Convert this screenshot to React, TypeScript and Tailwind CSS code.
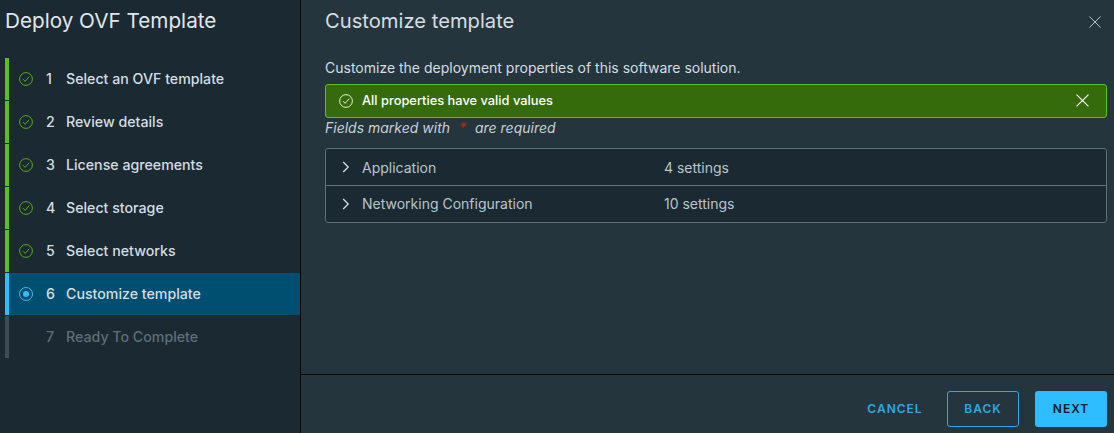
import React from 'react';

const font = 'font-["Inter","Noto_Sans",sans-serif]';

const steps = [
  { n: 1, label: 'Select an OVF template', state: 'done' },
  { n: 2, label: 'Review details', state: 'done' },
  { n: 3, label: 'License agreements', state: 'done' },
  { n: 4, label: 'Select storage', state: 'done' },
  { n: 5, label: 'Select networks', state: 'done' },
  { n: 6, label: 'Customize template', state: 'active' },
  { n: 7, label: 'Ready To Complete', state: 'todo' },
];

const CheckCircle = ({ color, size = 14 }: { color: string; size?: number }) => (
  <svg width={size} height={size} viewBox="0 0 16 16" fill="none" stroke={color} strokeWidth="1">
    <circle cx="8" cy="8" r="7.3" />
    <path d="M4.6 8.2 7 10.7 11.6 5.4" />
  </svg>
);

const Close = ({ color, size }: { color: string; size: number }) => (
  <svg width={size} height={size} viewBox="0 0 12 12" fill="none" stroke={color} strokeWidth="1">
    <path d="M0.5 0.5 11.5 11.5M11.5 0.5 0.5 11.5" />
  </svg>
);

const Chevron = () => (
  <svg width="8" height="12" viewBox="0 0 8 12" fill="none" stroke="#d5dde2" strokeWidth="1.3">
    <path d="M1.2 1 6.2 6 1.2 11" />
  </svg>
);

const Step = ({ n, label, state }: { n: number; label: string; state: string }) => {
  const bar = state === 'done' ? 'bg-[#5ec010]' : state === 'active' ? 'bg-[#2ebdff]' : 'bg-[#3d4d55]';
  return (
    <div className={`flex h-[42px] items-stretch ${state === 'active' ? 'bg-[#004f70]' : ''}`}>
      <div className={`w-1 ${bar}`} />
      <div className="flex w-[37px] items-center pl-[10px]">
        {state === 'done' && <CheckCircle color="#5ec010" />}
        {state === 'active' && (
          <span className="flex h-[14px] w-[14px] items-center justify-center rounded-full border border-[#2ebdff]">
            <span className="h-[6px] w-[6px] rounded-full bg-[#2ebdff]" />
          </span>
        )}
      </div>
      <div className={`flex items-center pb-[1px] text-[14.2px] font-medium ${state === 'todo' ? 'text-[#5f6e76]' : 'text-[#d5dde2]'}`}>
        <span className="w-[20px]">{n}</span>
        <span>{label}</span>
      </div>
    </div>
  );
};

const SectionRow = ({ label, count, last }: { label: string; count: string; last?: boolean }) => (
  <div className={`flex items-center text-[14px] text-[#b9c5cb] ${last ? 'h-[36px] pb-[1px]' : 'h-[37px] border-b border-[#5f7079]'}`}>
    <div className="flex w-[36px] justify-center pl-[4px]">
      <Chevron />
    </div>
    <span className="w-[302px]">{label}</span>
    <span>{count}</span>
  </div>
);

export default function App() {
  return (
    <div className={`flex h-[433px] w-[1114px] overflow-hidden bg-[#25353d] ${font}`}>
      <aside className="w-[301px] shrink-0 border-r border-black bg-[#1b2a32]">
        <h1 className="pl-[5px] pt-[9px] text-[20.7px] leading-[24px] font-normal text-[#e0e6ea]">Deploy OVF Template</h1>
        <div className="ml-[5px] mt-[25px] flex flex-col gap-px">
          {steps.map((s) => (
            <Step key={s.n} {...s} />
          ))}
        </div>
      </aside>
      <main className="flex min-w-0 flex-1 flex-col">
        <div className="flex-1 pl-[24px] pr-[7px]">
          <div className="flex items-center justify-between pt-[9px]">
            <h2 className="text-[20.2px] leading-[24px] font-normal text-[#d5dde2]">Customize template</h2>
            <div className="pr-[6px] pt-[1px]">
              <Close color="#b9c5cb" size={12} />
            </div>
          </div>
          <p className="mt-[26px] text-[14px] leading-[18px] text-[#d5dde2]">Customize the deployment properties of this software solution.</p>
          <div className="mt-[7px] flex h-[34px] items-center justify-between rounded-[3px] border border-[#5ec010] bg-[#356b0b] pl-[13px] pr-[17px]">
            <div className="flex items-center gap-[9px] text-[12.85px] font-medium text-white">
              <CheckCircle color="#ffffff" />
              <span>All properties have valid values</span>
            </div>
            <div className="pb-[2px]">
              <Close color="#ffffff" size={13} />
            </div>
          </div>
          <p className="mt-[1px] text-[14px] leading-[18px] text-[#c5d0d6] italic">
            Fields marked with <span className="mx-[5px] text-[#c92100]">*</span> are required
          </p>
          <div className="mt-[11px] rounded-[3px] border border-[#5f7079] bg-[#1b2a32]">
            <SectionRow label="Application" count="4 settings" />
            <SectionRow label="Networking Configuration" count="10 settings" last />
          </div>
        </div>
        <footer className="flex h-[59px] items-start justify-end gap-[16px] border-t border-black pr-[7px] pt-[16px] text-[12px] font-semibold tracking-[1px]">
          <button className="h-[36px] w-[72px] text-[#2ea8e6]">CANCEL</button>
          <button className="h-[36px] w-[72px] rounded-[3px] border border-[#2ea8e6] text-[#2ea8e6]">BACK</button>
          <button className="h-[36px] w-[72px] rounded-[3px] bg-[#2ebdff] text-[#0a1a22]">NEXT</button>
        </footer>
      </main>
    </div>
  );
}
